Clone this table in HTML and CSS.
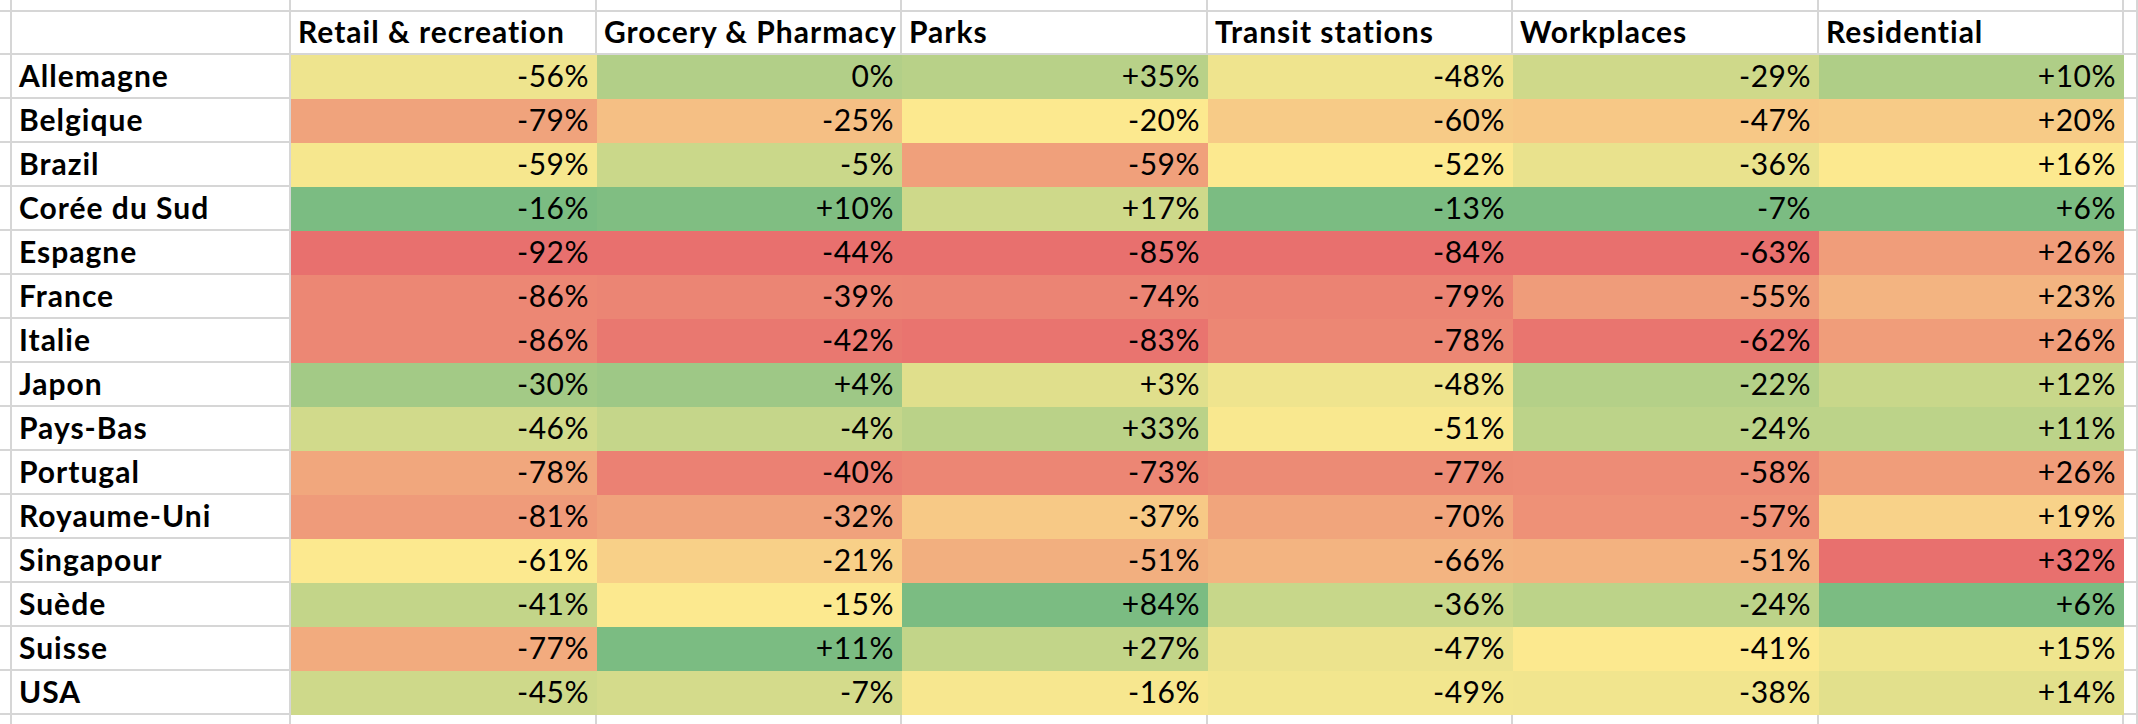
FILE: index.html
```html
<!DOCTYPE html>
<html lang="fr">
<head>
<meta charset="utf-8">
<title>Mobility</title>
<link rel="stylesheet" href="styles.css">
</head>
<body>
<div class="sheet">
  <div class="c edge"></div><div class="c"></div><div class="c"></div><div class="c"></div><div class="c"></div><div class="c"></div><div class="c"></div><div class="c"></div><div class="c"></div>

  <div class="c edge"></div><div class="c"></div>
  <div class="c hd">Retail &amp; recreation</div>
  <div class="c hd">Grocery &amp; Pharmacy</div>
  <div class="c hd">Parks</div>
  <div class="c hd">Transit stations</div>
  <div class="c hd">Workplaces</div>
  <div class="c hd">Residential</div>
  <div class="c"></div>

  <div class="c edge"></div><div class="c lbl">Allemagne</div>
  <div class="c v" style="background:rgb(238,228,142)">-56%</div>
  <div class="c v" style="background:rgb(178,207,136)">0%</div>
  <div class="c v" style="background:rgb(184,209,136)">+35%</div>
  <div class="c v" style="background:rgb(239,228,142)">-48%</div>
  <div class="c v" style="background:rgb(207,217,138)">-29%</div>
  <div class="c v" style="background:rgb(175,206,135)">+10%</div>
  <div class="c"></div>

  <div class="c edge"></div><div class="c lbl">Belgique</div>
  <div class="c v" style="background:rgb(240,163,124)">-79%</div>
  <div class="c v" style="background:rgb(245,191,132)">-25%</div>
  <div class="c v" style="background:rgb(252,233,143)">-20%</div>
  <div class="c v" style="background:rgb(247,203,135)">-60%</div>
  <div class="c v" style="background:rgb(247,200,134)">-47%</div>
  <div class="c v" style="background:rgb(247,203,135)">+20%</div>
  <div class="c"></div>

  <div class="c edge"></div><div class="c lbl">Brazil</div>
  <div class="c v" style="background:rgb(246,231,142)">-59%</div>
  <div class="c v" style="background:rgb(202,216,138)">-5%</div>
  <div class="c v" style="background:rgb(240,160,123)">-59%</div>
  <div class="c v" style="background:rgb(252,233,143)">-52%</div>
  <div class="c v" style="background:rgb(233,226,141)">-36%</div>
  <div class="c v" style="background:rgb(252,233,143)">+16%</div>
  <div class="c"></div>

  <div class="c edge"></div><div class="c lbl">Corée du Sud</div>
  <div class="c v" style="background:rgb(123,188,130)">-16%</div>
  <div class="c v" style="background:rgb(128,190,130)">+10%</div>
  <div class="c v" style="background:rgb(206,217,138)">+17%</div>
  <div class="c v" style="background:rgb(123,188,130)">-13%</div>
  <div class="c v" style="background:rgb(123,188,130)">-7%</div>
  <div class="c v" style="background:rgb(123,188,130)">+6%</div>
  <div class="c"></div>

  <div class="c edge"></div><div class="c lbl">Espagne</div>
  <div class="c v" style="background:rgb(232,112,110)">-92%</div>
  <div class="c v" style="background:rgb(232,112,110)">-44%</div>
  <div class="c v" style="background:rgb(232,112,110)">-85%</div>
  <div class="c v" style="background:rgb(232,112,110)">-84%</div>
  <div class="c v" style="background:rgb(232,112,110)">-63%</div>
  <div class="c v" style="background:rgb(240,157,122)">+26%</div>
  <div class="c"></div>

  <div class="c edge"></div><div class="c lbl">France</div>
  <div class="c v" style="background:rgb(236,135,116)">-86%</div>
  <div class="c v" style="background:rgb(235,133,116)">-39%</div>
  <div class="c v" style="background:rgb(235,132,116)">-74%</div>
  <div class="c v" style="background:rgb(235,131,115)">-79%</div>
  <div class="c v" style="background:rgb(239,156,122)">-55%</div>
  <div class="c v" style="background:rgb(243,180,129)">+23%</div>
  <div class="c"></div>

  <div class="c edge"></div><div class="c lbl">Italie</div>
  <div class="c v" style="background:rgb(236,135,116)">-86%</div>
  <div class="c v" style="background:rgb(233,120,112)">-42%</div>
  <div class="c v" style="background:rgb(233,116,111)">-83%</div>
  <div class="c v" style="background:rgb(236,135,116)">-78%</div>
  <div class="c v" style="background:rgb(233,117,111)">-62%</div>
  <div class="c v" style="background:rgb(240,157,122)">+26%</div>
  <div class="c"></div>

  <div class="c edge"></div><div class="c lbl">Japon</div>
  <div class="c v" style="background:rgb(163,202,134)">-30%</div>
  <div class="c v" style="background:rgb(158,200,134)">+4%</div>
  <div class="c v" style="background:rgb(224,223,140)">+3%</div>
  <div class="c v" style="background:rgb(239,228,142)">-48%</div>
  <div class="c v" style="background:rgb(180,208,136)">-22%</div>
  <div class="c v" style="background:rgb(200,215,138)">+12%</div>
  <div class="c"></div>

  <div class="c edge"></div><div class="c lbl">Pays-Bas</div>
  <div class="c v" style="background:rgb(209,218,139)">-46%</div>
  <div class="c v" style="background:rgb(197,214,138)">-4%</div>
  <div class="c v" style="background:rgb(186,210,136)">+33%</div>
  <div class="c v" style="background:rgb(249,232,143)">-51%</div>
  <div class="c v" style="background:rgb(188,211,137)">-24%</div>
  <div class="c v" style="background:rgb(188,211,137)">+11%</div>
  <div class="c"></div>

  <div class="c edge"></div><div class="c lbl">Portugal</div>
  <div class="c v" style="background:rgb(241,167,125)">-78%</div>
  <div class="c v" style="background:rgb(235,129,115)">-40%</div>
  <div class="c v" style="background:rgb(236,134,116)">-73%</div>
  <div class="c v" style="background:rgb(236,139,117)">-77%</div>
  <div class="c v" style="background:rgb(237,140,118)">-58%</div>
  <div class="c v" style="background:rgb(240,157,122)">+26%</div>
  <div class="c"></div>

  <div class="c edge"></div><div class="c lbl">Royaume-Uni</div>
  <div class="c v" style="background:rgb(239,155,122)">-81%</div>
  <div class="c v" style="background:rgb(240,162,124)">-32%</div>
  <div class="c v" style="background:rgb(247,201,134)">-37%</div>
  <div class="c v" style="background:rgb(241,165,124)">-70%</div>
  <div class="c v" style="background:rgb(238,145,119)">-57%</div>
  <div class="c v" style="background:rgb(248,210,137)">+19%</div>
  <div class="c"></div>

  <div class="c edge"></div><div class="c lbl">Singapour</div>
  <div class="c v" style="background:rgb(252,233,143)">-61%</div>
  <div class="c v" style="background:rgb(248,208,136)">-21%</div>
  <div class="c v" style="background:rgb(242,175,127)">-51%</div>
  <div class="c v" style="background:rgb(243,180,129)">-66%</div>
  <div class="c v" style="background:rgb(243,178,128)">-51%</div>
  <div class="c v" style="background:rgb(232,112,110)">+32%</div>
  <div class="c"></div>

  <div class="c edge"></div><div class="c lbl">Suède</div>
  <div class="c v" style="background:rgb(195,213,137)">-41%</div>
  <div class="c v" style="background:rgb(252,233,143)">-15%</div>
  <div class="c v" style="background:rgb(123,188,130)">+84%</div>
  <div class="c v" style="background:rgb(199,215,138)">-36%</div>
  <div class="c v" style="background:rgb(188,211,137)">-24%</div>
  <div class="c v" style="background:rgb(123,188,130)">+6%</div>
  <div class="c"></div>

  <div class="c edge"></div><div class="c lbl">Suisse</div>
  <div class="c v" style="background:rgb(242,171,126)">-77%</div>
  <div class="c v" style="background:rgb(123,188,130)">+11%</div>
  <div class="c v" style="background:rgb(194,213,137)">+27%</div>
  <div class="c v" style="background:rgb(236,227,141)">-47%</div>
  <div class="c v" style="background:rgb(252,233,143)">-41%</div>
  <div class="c v" style="background:rgb(239,229,142)">+15%</div>
  <div class="c"></div>

  <div class="c edge"></div><div class="c lbl">USA</div>
  <div class="c v" style="background:rgb(206,217,138)">-45%</div>
  <div class="c v" style="background:rgb(212,219,139)">-7%</div>
  <div class="c v" style="background:rgb(247,231,143)">-16%</div>
  <div class="c v" style="background:rgb(242,230,142)">-49%</div>
  <div class="c v" style="background:rgb(241,229,142)">-38%</div>
  <div class="c v" style="background:rgb(226,224,140)">+14%</div>
  <div class="c"></div>

  <div class="c edge"></div><div class="c"></div><div class="c"></div><div class="c"></div><div class="c"></div><div class="c"></div><div class="c"></div><div class="c"></div><div class="c"></div>
</div>
</body>
</html>
```
FILE: styles.css
```css
html, body {
  margin: 0;
  padding: 0;
  background: #ffffff;
  overflow: hidden;
}

.sheet {
  display: grid;
  grid-template-columns: 12px 279px 306px 305px 306px 305px 306px 305px 1fr;
  grid-template-rows: 12px 43px repeat(15, 44px) 30px;
  width: 2138px;
  height: 724px;
  overflow: hidden;
  font-family: Lato, "Open Sans", "Liberation Sans", sans-serif;
  font-size: 30px;
  line-height: 35px;
  color: #000000;
}

.c {
  box-sizing: border-box;
  border-right: 2px solid #d6d6d6;
  border-bottom: 2px solid #d6d6d6;
  display: flex;
  align-items: flex-end;
  padding: 0 0 4px 0;
  white-space: nowrap;
  overflow: hidden;
}

.hd {
  font-weight: 700;
  letter-spacing: 1px;
  padding-left: 7px;
}

.lbl {
  font-weight: 700;
  letter-spacing: 1px;
  padding-left: 7px;
}

.v {
  border-color: transparent;
  justify-content: flex-end;
  padding-right: 6px;
  font-weight: 400;
  letter-spacing: 0.5px;
}
```
